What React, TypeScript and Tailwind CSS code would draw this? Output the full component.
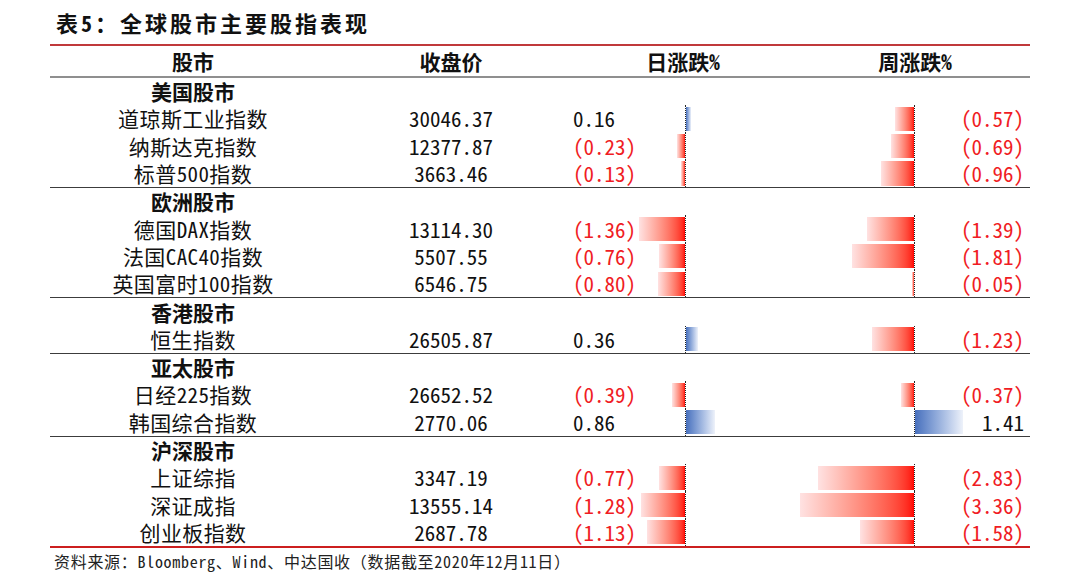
import React from "react";

type Row = [string, string, number, number];
type Section = { name: string; rows: Row[] };

const sections: Section[] = [
  {
    name: "美国股市",
    rows: [
      ["道琼斯工业指数", "30046.37", 0.16, -0.57],
      ["纳斯达克指数", "12377.87", -0.23, -0.69],
      ["标普500指数", "3663.46", -0.13, -0.96],
    ],
  },
  {
    name: "欧洲股市",
    rows: [
      ["德国DAX指数", "13114.30", -1.36, -1.39],
      ["法国CAC40指数", "5507.55", -0.76, -1.81],
      ["英国富时100指数", "6546.75", -0.8, -0.05],
    ],
  },
  {
    name: "香港股市",
    rows: [["恒生指数", "26505.87", 0.36, -1.23]],
  },
  {
    name: "亚太股市",
    rows: [
      ["日经225指数", "26652.52", -0.39, -0.37],
      ["韩国综合指数", "2770.06", 0.86, 1.41],
    ],
  },
  {
    name: "沪深股市",
    rows: [
      ["上证综指", "3347.19", -0.77, -2.83],
      ["深证成指", "13555.14", -1.28, -3.36],
      ["创业板指数", "2687.78", -1.13, -1.58],
    ],
  },
];

const SCALE = 34;

function fmt(v: number) {
  return v < 0 ? `(${Math.abs(v).toFixed(2)})` : v.toFixed(2);
}

function NegBar({ v }: { v: number }) {
  return (
    <div
      className="h-full bg-linear-to-l from-[#ff0000] to-[#ffe2e2]"
      style={{ width: Math.abs(v) * SCALE }}
    />
  );
}

function PosBar({ v }: { v: number }) {
  return (
    <div
      className="h-full bg-linear-to-r from-[#4870bd] to-[#eef2fa]"
      style={{ width: Math.abs(v) * SCALE }}
    />
  );
}

function DataRow({ r }: { r: Row }) {
  const [name, close, d, w] = r;
  return (
    <div className="flex h-[27.3px] text-[21px] leading-none">
      <div className="w-[286px] flex items-center justify-center text-[#111] tracking-[0.4px]">{name}</div>
      <div className="w-[230px] flex items-center justify-center text-[#111]">{close}</div>
      <div className="w-[234px] flex">
        <div
          className={
            "w-[71px] pl-[7px] flex items-center " +
            (d < 0 ? "text-[#f01c24]" : "text-[#111]")
          }
        >
          {fmt(d)}
        </div>
        <div className="w-[48px] flex justify-end py-[1.6px]">{d < 0 && <NegBar v={d} />}</div>
        <div className="flex-1 flex border-l border-dotted border-[#222] py-[1.6px]">
          {d > 0 && <PosBar v={d} />}
        </div>
      </div>
      <div className="w-[230px] flex">
        <div className="w-[114px] flex justify-end py-[1.6px]">{w < 0 && <NegBar v={w} />}</div>
        <div className="flex-1 flex border-l border-dotted border-[#222]">
          <div className="flex py-[1.6px]">{w > 0 && <PosBar v={w} />}</div>
          <div
            className={
              "ml-auto pr-[6px] flex items-center " +
              (w < 0 ? "text-[#f01c24]" : "text-[#111]")
            }
          >
            {fmt(w)}
          </div>
        </div>
      </div>
    </div>
  );
}

export default function App() {
  return (
    <div className="w-[1080px] h-[574px] bg-white pl-[50px] font-['Noto_Sans_Mono_CJK_SC','Noto_Sans_CJK_SC',sans-serif]">
      <div className="w-[980px]">
        <div className="h-[44px] flex items-center pl-[6px] text-[22px] font-bold tracking-[3px] text-[#111] leading-none">
          表5：全球股市主要股指表现
        </div>
        <div className="h-[2px] bg-[#c0393b]" />
        <div className="flex h-[30px] items-center text-[21px] font-bold text-[#111] leading-none">
          <div className="w-[286px] text-center">股市</div>
          <div className="w-[230px] text-center">收盘价</div>
          <div className="w-[234px] text-center">日涨跌%</div>
          <div className="w-[230px] text-center">周涨跌%</div>
        </div>
        <div className="h-[2px] bg-[#8f8f8f]" />
        {sections.map((s, i) => (
          <div key={s.name}>
            <div className="flex h-[27.3px] items-center text-[21px] font-bold text-[#111] leading-none">
              <div className="w-[286px] text-center">{s.name}</div>
            </div>
            {s.rows.map((r) => (
              <DataRow key={r[0]} r={r} />
            ))}
            {i < sections.length - 1 ? (
              <div className="h-[1px] bg-[#3c3c3c]" />
            ) : (
              <div className="h-[1.5px] bg-[#cc1f1f]" />
            )}
          </div>
        ))}
        <div className="h-[26px] flex items-center pl-[4px] text-[16px] tracking-[0.7px] text-[#222] leading-none">
          资料来源：Bloomberg、Wind、中达国收（数据截至2020年12月11日）
        </div>
      </div>
    </div>
  );
}
